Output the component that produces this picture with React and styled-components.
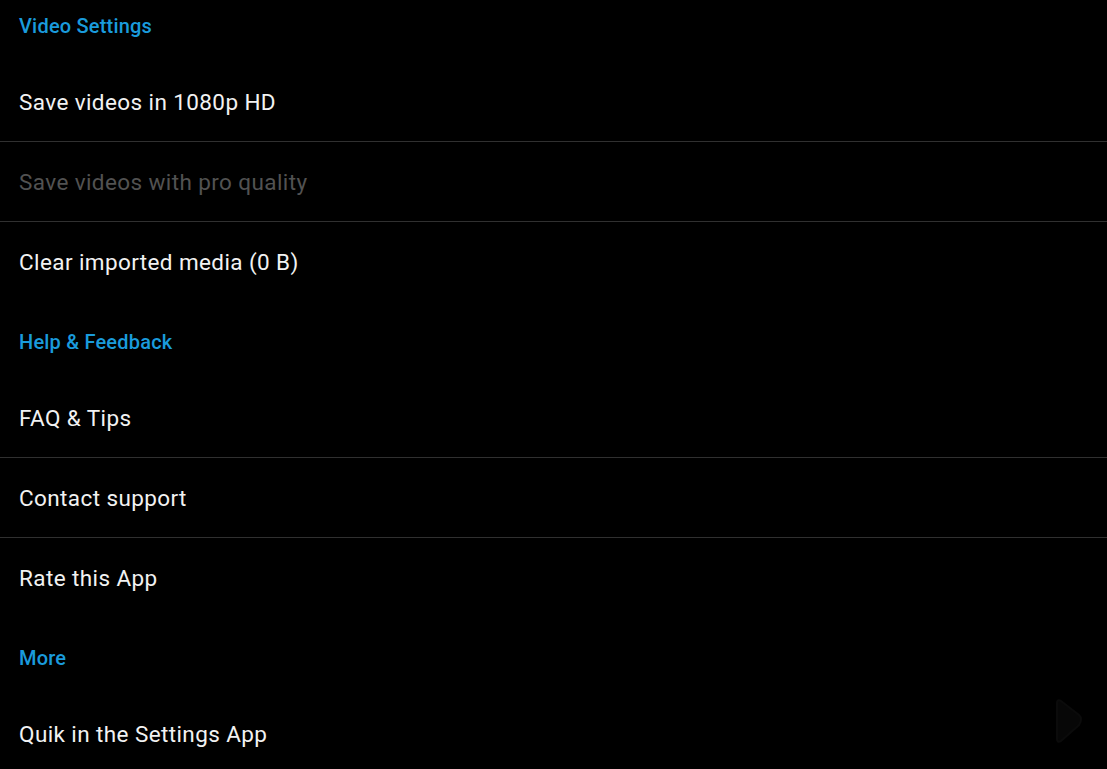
import React from "react";
import styled, { createGlobalStyle } from "styled-components";

const GlobalStyle = createGlobalStyle`
  html, body {
    margin: 0;
    padding: 0;
    background: #000;
    overflow: hidden;
  }
  body {
    font-family: Roboto, "Noto Sans", sans-serif;
  }
`;

const Screen = styled.div`
  position: relative;
  width: 1107px;
  height: 769px;
  background: #000;
  overflow: hidden;
`;

// list is scrolled a little, so the first header is cut at the top
const List = styled.div`
  display: flex;
  flex-direction: column;
  margin-top: -14px;
`;

const Header = styled.div`
  height: 76px;
  box-sizing: border-box;
  padding: 28px 19px 0;
  color: #1a9bdc;
  font-size: 20px;
  font-weight: 500;
  letter-spacing: 0.2px;
  line-height: 24px;
`;

const Row = styled.div`
  height: 80px;
  display: flex;
  align-items: center;
  padding: 0 19px;
  color: ${(p) => (p.$disabled ? "#525252" : "#f2f2f2")};
  font-size: 22.5px;
  letter-spacing: 0.4px;
  border-bottom: ${(p) => (p.$divider ? "1.5px solid #303030" : "none")};
  box-sizing: border-box;
`;

const Ghost = styled.svg`
  position: absolute;
  right: 22px;
  bottom: 24px;
`;

const sections = [
  {
    title: "Video Settings",
    items: [
      { label: "Save videos in 1080p HD" },
      { label: "Save videos with pro quality", disabled: true },
      { label: "Clear imported media (0 B)" },
    ],
  },
  {
    title: "Help & Feedback",
    items: [
      { label: "FAQ & Tips" },
      { label: "Contact support" },
      { label: "Rate this App" },
    ],
  },
  {
    title: "More",
    items: [{ label: "Quik in the Settings App" }],
  },
];

export default function App() {
  return (
    <Screen>
      <GlobalStyle />
      <List>
        {sections.map((s) => (
          <React.Fragment key={s.title}>
            <Header>{s.title}</Header>
            {s.items.map((it, i) => (
              <Row
                key={it.label}
                $disabled={it.disabled}
                $divider={i < s.items.length - 1}
              >
                {it.label}
              </Row>
            ))}
          </React.Fragment>
        ))}
      </List>
      <Ghost width="34" height="48" viewBox="0 0 34 48">
        <path
          d="M6 6 Q6 2 10 4 L28 18 Q32 22 28 28 L10 44 Q6 46 6 42 Z"
          fill="#070707"
          stroke="#0b0b0b"
          strokeWidth="2"
        />
      </Ghost>
    </Screen>
  );
}
